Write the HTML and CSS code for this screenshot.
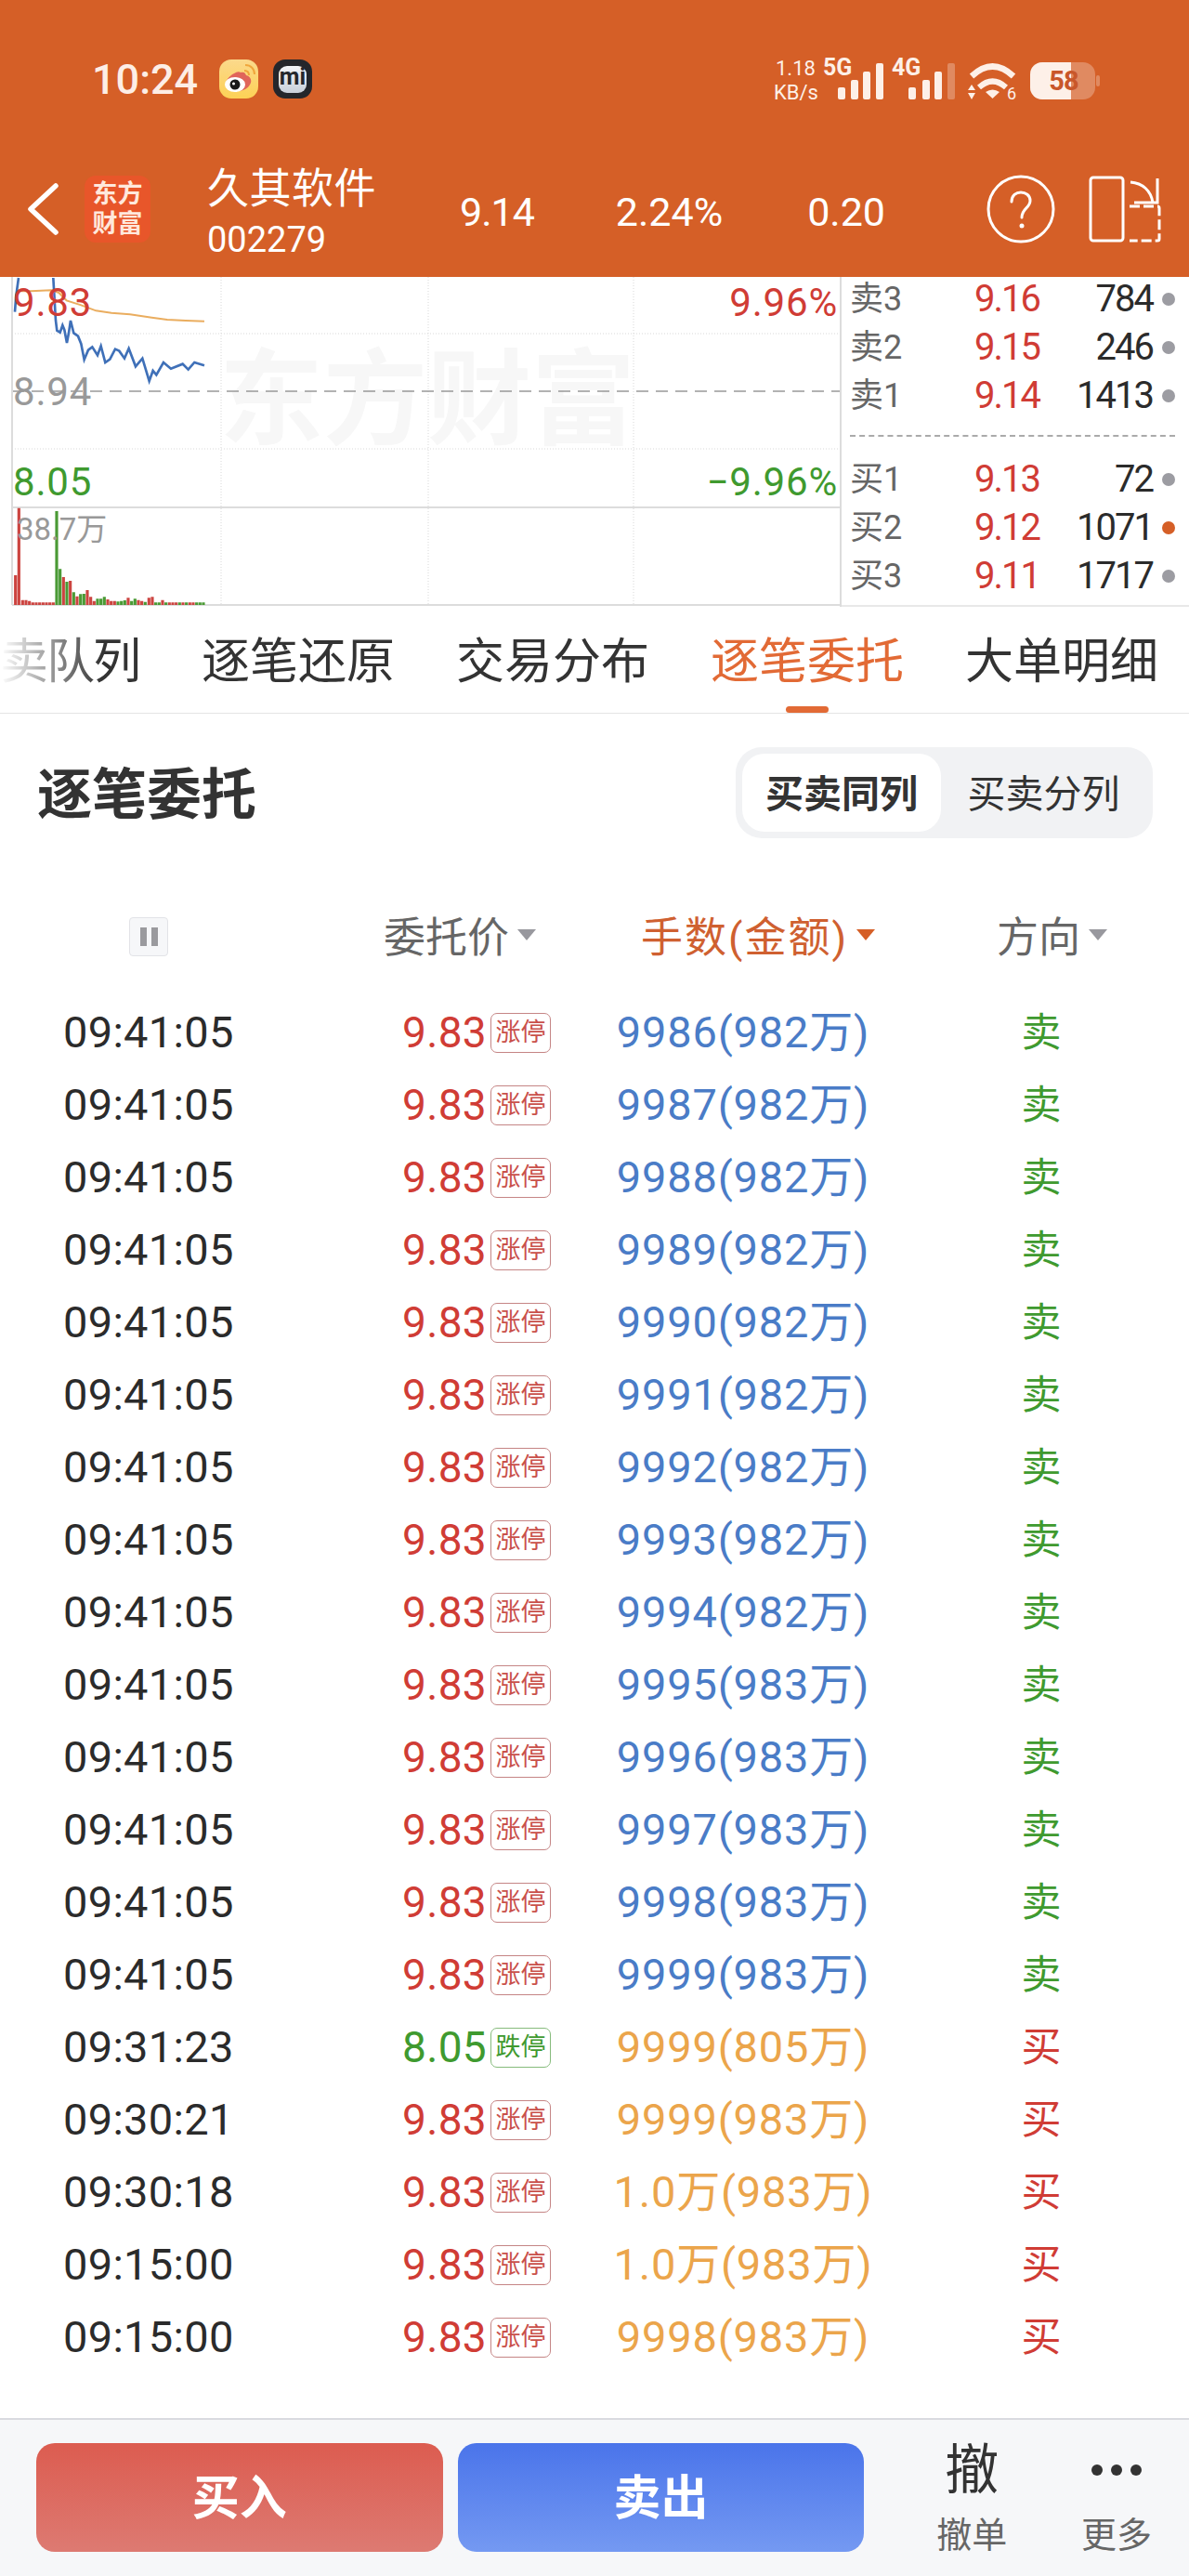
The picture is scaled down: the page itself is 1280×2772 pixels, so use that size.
FILE: index.html
```html
<!DOCTYPE html>
<html lang="zh-CN">
<head>
    <meta charset="UTF-8">
    <meta name="viewport" content="width=device-width, initial-scale=1.0">
    <title>久其软件 逐笔委托</title>
    <link rel="stylesheet" href="styles.css">
</head>
<body>
    <header class="header">
        <div class="status-bar">
            <span class="clock">10:24</span>
            <svg class="app-icon" width="42" height="42" viewBox="0 0 42 42">
                <defs>
                    <linearGradient id="weiboBg" x1="0" y1="0" x2="0" y2="1">
                        <stop offset="0" stop-color="#fbd98c"/>
                        <stop offset="1" stop-color="#fdd155"/>
                    </linearGradient>
                </defs>
                <rect width="42" height="42" rx="13" fill="url(#weiboBg)"/>
                <path d="M7 27c0-6 6-11 11-13 2-1 4-1 5 0 3-1 5 0 6 3 4 1 6 4 5 8-2 6-8 9-15 9-7 0-12-3-12-7z" fill="#e0655a"/>
                <ellipse cx="17" cy="27" rx="11" ry="8" fill="#fff"/>
                <circle cx="17" cy="27" r="5.5" fill="#1a1a1a"/>
                <circle cx="15.500" cy="26" r="1.500" fill="#fff"/>
                <path d="M27 12c3 0 5 2 5 5M28 6c6 0 10 4 10 10" fill="none" stroke="#f0a63c" stroke-width="2"/>
            </svg>
            <svg class="app-icon mi-icon" width="42" height="42" viewBox="0 0 42 42">
                <defs>
                    <linearGradient id="miBg" x1="0" y1="0" x2="0" y2="1">
                        <stop offset="0" stop-color="#f2f4f7"/>
                        <stop offset="1" stop-color="#c9d0da"/>
                    </linearGradient>
                </defs>
                <rect width="42" height="42" rx="13" fill="#24262b"/>
                <rect x="6" y="7" width="30" height="29" rx="9" fill="url(#miBg)"/>
                <text class="mi-text" x="21" y="27" text-anchor="middle">mi</text>
            </svg>
            <svg class="status-right" width="355" height="55" viewBox="0 0 355 55">
                <g class="status-ink">
                    <text class="speed" x="2" y="23">1.18</text>
                    <text class="speed" x="0" y="49">KB/s</text>
                    <text class="net" x="53" y="23">5G</text>
                    <rect x="69" y="36" width="8" height="13" rx="2"/>
                    <rect x="83" y="28" width="8" height="21" rx="2"/>
                    <rect x="96" y="19" width="8" height="30" rx="2"/>
                    <rect x="110" y="10" width="8" height="39" rx="2"/>
                    <text class="net" x="127" y="23">4G</text>
                    <rect x="145" y="36" width="8" height="13" rx="2"/>
                    <rect x="160" y="28" width="8" height="21" rx="2"/>
                    <rect x="173" y="19" width="8" height="30" rx="2"/>
                    <rect x="187" y="10" width="8" height="39" rx="2" opacity="0.3"/>
                    <path d="M213 24Q235.500 3 258 24" fill="none" stroke="#fdf0e8" stroke-width="6.500"/>
                    <path d="M221 36Q235.500 23 250 36" fill="none" stroke="#fdf0e8" stroke-width="6"/>
                    <path d="M235.500 48L228 41Q235.500 36 243 41Z"/>
                    <path d="M209 39L213 33L217 39ZM209 42L217 42L213 49Z"/>
                    <text class="wifi-num" x="251" y="49">6</text>
                    <rect x="276" y="9" width="70" height="40" rx="13" opacity="0.3"/>
                    <path d="M289 9H320V49H289A13 13 0 0 1 276 36V22A13 13 0 0 1 289 9Z"/>
                    <rect x="347" y="23" width="4" height="12" rx="2" opacity="0.3"/>
                    <text class="battery-num" x="312" y="39" text-anchor="middle">58</text>
                </g>
            </svg>
        </div>
        <div class="nav">
            <svg class="back" width="34" height="56" viewBox="0 0 34 56">
                <path d="M31 3L4 28L31 53" fill="none" stroke="#fff" stroke-width="5.500" stroke-linecap="round" stroke-linejoin="round"/>
            </svg>
            <div class="logo">东方<br>财富</div>
            <div class="stock">
                <div class="stock-name">久其软件</div>
                <div class="stock-code">002279</div>
            </div>
            <div class="quotes">
                <span class="quote-price">9.14</span>
                <span>2.24%</span>
                <span class="quote-change">0.20</span>
            </div>
            <svg class="help" width="74" height="74" viewBox="0 0 74 74">
                <circle cx="37" cy="37" r="35" fill="none" stroke="#fff" stroke-width="3"/>
                <path d="M27 29c0-7 5-10 10-10s10 3 10 9c0 8-9 8-9 18" fill="none" stroke="#fff" stroke-width="3" stroke-linecap="round"/>
                <circle cx="38" cy="55" r="2.500" fill="#fff"/>
            </svg>
            <svg class="split" width="78" height="72" viewBox="0 0 78 72">
                <g fill="none" stroke="#fff" stroke-width="3">
                    <rect x="2" y="2" width="35" height="68" rx="3"/>
                    <path d="M45 7C58 8 67 16 69 29"/>
                    <path d="M74 3V29H49"/>
                    <path d="M44 33H74A2 2 0 0 1 76 35V68A2 2 0 0 1 74 70H44" stroke-dasharray="11 4"/>
                </g>
            </svg>
        </div>
    </header>

    <section class="market">
        <svg class="chart" width="906" height="355" viewBox="0 0 906 355">
            <text class="watermark" x="236" y="172">东方财富</text>
            <g class="grid-dots">
                <path d="M13 61H905M13 185H905"/>
                <path d="M238 0V353M461 0V353M682 0V353"/>
            </g>
            <path d="M13 123H905" class="grid-dash"/>
            <path d="M13 248H905M13 353H905M13 0V353M905 0V355" class="grid-solid"/>
            <g transform="translate(0,-3) scale(0.3333)">
                <polyline class="avg-line" points="62,55 100,55 165,52 190,60 215,85 262,100 310,118 360,125 420,130 490,140 540,147 600,150 660,152"/>
                <polyline class="price-line" points="48,122 52,70 60,12"/>
                <polyline class="price-line" points="172,12 180,150 184,182 194,188 202,165 208,180 216,222 222,190 228,150 238,190 252,200 262,225 272,276 285,245 298,235 315,262 326,232 340,285 355,275 372,242 385,248 402,272 416,240 438,298 460,272 482,345 494,312 505,325 528,285 552,305 590,290 608,308 628,285 660,295"/>
                <path class="bars-red" d="M50 1068V972M61 1068V755M73 1068V1052M84 1068V1052M95 1068V1055M106 1068V1060M117 1068V1060M128 1068V1060M139 1068V1060M150 1068V1060M161 1068V1060M172 1068V1060M205 1068V978M227 1068V990M249 1068V1040M282 1068V1020M293 1068V1042M304 1068V1055M348 1068V1050M359 1068V1055M370 1068V1055M414 1068V1045M447 1068V1052M458 1068V1055M481 1068V1045M492 1068V1042M525 1068V1052M547 1068V1060M558 1068V1060M569 1068V1060M591 1068V1060M613 1068V1060M624 1068V1060"/>
                <path class="bars-green" d="M183 1068V765M194 1068V952M216 1068V993M238 1068V1027M260 1068V1033M271 1068V1032M315 1068V1048M326 1068V1048M337 1068V1042M381 1068V1057M392 1068V1055M403 1068V1053M425 1068V1055M436 1068V1048M469 1068V1058M503 1068V1060M514 1068V1060M536 1068V1060M580 1068V1060M602 1068V1060M635 1068V1060M646 1068V1060M657 1068V1060"/>
            </g>
            <text class="axis red" x="14" y="42">9.83</text>
            <text class="axis gray" x="14" y="138">8.94</text>
            <text class="axis green" x="14" y="235">8.05</text>
            <text class="axis volume" x="18" y="283">38.7万</text>
            <text class="axis red" x="902" y="42" text-anchor="end">9.96%</text>
            <text class="axis green" x="902" y="235" text-anchor="end">−9.96%</text>
        </svg>
        <div class="book">
            <div class="book-group">
                <div class="book-row"><span class="book-label">卖3</span><span class="book-price">9.16</span><span class="book-vol">784</span><i class="dot"></i></div>
                <div class="book-row"><span class="book-label">卖2</span><span class="book-price">9.15</span><span class="book-vol">246</span><i class="dot"></i></div>
                <div class="book-row"><span class="book-label">卖1</span><span class="book-price">9.14</span><span class="book-vol">1413</span><i class="dot"></i></div>
            </div>
            <div class="book-divider"></div>
            <div class="book-group">
                <div class="book-row"><span class="book-label">买1</span><span class="book-price">9.13</span><span class="book-vol">72</span><i class="dot"></i></div>
                <div class="book-row"><span class="book-label">买2</span><span class="book-price">9.12</span><span class="book-vol">1071</span><i class="dot dot-hot"></i></div>
                <div class="book-row"><span class="book-label">买3</span><span class="book-price">9.11</span><span class="book-vol">1717</span><i class="dot"></i></div>
            </div>
        </div>
    </section>

    <nav class="tabs">
        <span class="tab">卖队列</span>
        <span class="tab">逐笔还原</span>
        <span class="tab">交易分布</span>
        <span class="tab active">逐笔委托</span>
        <span class="tab">大单明细</span>
    </nav>

    <main class="orders">
        <div class="orders-top">
            <h2 class="orders-title">逐笔委托</h2>
            <div class="segment">
                <span class="segment-item selected">买卖同列</span>
                <span class="segment-item">买卖分列</span>
            </div>
        </div>

        <div class="orders-head">
            <span class="pause"><i></i><i></i></span>
            <span class="head-cell head-price">委托价<i class="tri"></i></span>
            <span class="head-cell head-qty sorted">手数(金额)<i class="tri"></i></span>
            <span class="head-cell head-side">方向<i class="tri"></i></span>
        </div>

        <div class="row"><span class="time">09:41:05</span><span class="price red">9.83</span><span class="limit">涨停</span><span class="qty blue">9986(982万)</span><span class="side green">卖</span></div>
        <div class="row"><span class="time">09:41:05</span><span class="price red">9.83</span><span class="limit">涨停</span><span class="qty blue">9987(982万)</span><span class="side green">卖</span></div>
        <div class="row"><span class="time">09:41:05</span><span class="price red">9.83</span><span class="limit">涨停</span><span class="qty blue">9988(982万)</span><span class="side green">卖</span></div>
        <div class="row"><span class="time">09:41:05</span><span class="price red">9.83</span><span class="limit">涨停</span><span class="qty blue">9989(982万)</span><span class="side green">卖</span></div>
        <div class="row"><span class="time">09:41:05</span><span class="price red">9.83</span><span class="limit">涨停</span><span class="qty blue">9990(982万)</span><span class="side green">卖</span></div>
        <div class="row"><span class="time">09:41:05</span><span class="price red">9.83</span><span class="limit">涨停</span><span class="qty blue">9991(982万)</span><span class="side green">卖</span></div>
        <div class="row"><span class="time">09:41:05</span><span class="price red">9.83</span><span class="limit">涨停</span><span class="qty blue">9992(982万)</span><span class="side green">卖</span></div>
        <div class="row"><span class="time">09:41:05</span><span class="price red">9.83</span><span class="limit">涨停</span><span class="qty blue">9993(982万)</span><span class="side green">卖</span></div>
        <div class="row"><span class="time">09:41:05</span><span class="price red">9.83</span><span class="limit">涨停</span><span class="qty blue">9994(982万)</span><span class="side green">卖</span></div>
        <div class="row"><span class="time">09:41:05</span><span class="price red">9.83</span><span class="limit">涨停</span><span class="qty blue">9995(983万)</span><span class="side green">卖</span></div>
        <div class="row"><span class="time">09:41:05</span><span class="price red">9.83</span><span class="limit">涨停</span><span class="qty blue">9996(983万)</span><span class="side green">卖</span></div>
        <div class="row"><span class="time">09:41:05</span><span class="price red">9.83</span><span class="limit">涨停</span><span class="qty blue">9997(983万)</span><span class="side green">卖</span></div>
        <div class="row"><span class="time">09:41:05</span><span class="price red">9.83</span><span class="limit">涨停</span><span class="qty blue">9998(983万)</span><span class="side green">卖</span></div>
        <div class="row"><span class="time">09:41:05</span><span class="price red">9.83</span><span class="limit">涨停</span><span class="qty blue">9999(983万)</span><span class="side green">卖</span></div>
        <div class="row"><span class="time">09:31:23</span><span class="price green">8.05</span><span class="limit limit-down">跌停</span><span class="qty amber">9999(805万)</span><span class="side red">买</span></div>
        <div class="row"><span class="time">09:30:21</span><span class="price red">9.83</span><span class="limit">涨停</span><span class="qty amber">9999(983万)</span><span class="side red">买</span></div>
        <div class="row"><span class="time">09:30:18</span><span class="price red">9.83</span><span class="limit">涨停</span><span class="qty amber">1.0万(983万)</span><span class="side red">买</span></div>
        <div class="row"><span class="time">09:15:00</span><span class="price red">9.83</span><span class="limit">涨停</span><span class="qty amber">1.0万(983万)</span><span class="side red">买</span></div>
        <div class="row"><span class="time">09:15:00</span><span class="price red">9.83</span><span class="limit">涨停</span><span class="qty amber">9998(983万)</span><span class="side red">买</span></div>
    </main>

    <footer class="footer">
        <button class="trade buy" type="button">买入</button>
        <button class="trade sell" type="button">卖出</button>
        <div class="tool">
            <span class="tool-icon">撤</span>
            <span class="tool-label">撤单</span>
        </div>
        <div class="tool">
            <span class="tool-icon dots"><i></i><i></i><i></i></span>
            <span class="tool-label">更多</span>
        </div>
    </footer>
</body>
</html>
```

FILE: styles.css
```css
* {
    box-sizing: border-box;
}

body {
    margin: 0;
    width: 1280px;
    height: 2772px;
    display: flex;
    flex-direction: column;
    overflow: hidden;
    background-color: #fff;
    color: #333;
    font-family: Roboto, "Noto Sans CJK SC", sans-serif;
}

.red { color: #d03c35; fill: #d03c35; }
.green { color: #3f9a2f; fill: #3f9a2f; }
.gray { fill: #999; }
.blue { color: #4a7cc7; }
.amber { color: #eba54b; }

/* header */
.header {
    height: 298px;
    flex-shrink: 0;
    background-color: #d55f27;
    color: #fff;
}

.status-bar {
    height: 170px;
    padding: 0 92px 0 99px;
    display: flex;
    align-items: center;
}

.clock {
    font-size: 45px;
    font-weight: 500;
    color: #fdeee6;
    width: 137px;
}

.mi-icon {
    margin-left: 16px;
}

.mi-text {
    font-size: 25px;
    font-weight: 700;
    fill: #24262b;
}

.status-right {
    margin-left: auto;
}

.status-ink {
    fill: #fdf0e8;
}

.speed {
    font-size: 22px;
}

.net {
    font-size: 25px;
    font-weight: 700;
}

.wifi-num {
    font-size: 18px;
}

.battery-num {
    font-size: 29px;
    font-weight: 700;
    fill: #c9572a;
    letter-spacing: -1px;
}

.nav {
    height: 128px;
    padding: 0 0 18px 29px;
    display: flex;
    align-items: center;
}

.logo {
    width: 71px;
    height: 72px;
    margin-left: 28px;
    border-radius: 12px;
    background-color: #e8562a;
    color: #ffe8dc;
    font-size: 27px;
    font-weight: 700;
    line-height: 32px;
    text-align: center;
    padding-top: 4px;
}

.stock {
    width: 180px;
    margin: 10px 0 0 61px;
    white-space: nowrap;
}

.stock-name {
    font-size: 45px;
    letter-spacing: 0.5px;
    line-height: 56px;
}

.stock-code {
    font-size: 38px;
    line-height: 52px;
}

.quotes {
    margin: 6px 0 0 92px;
    display: flex;
    gap: 88px;
    font-size: 43px;
}

.quote-price {
    letter-spacing: -1px;
}

.quote-change {
    margin-left: 3px;
}

.help {
    margin-left: 109px;
}

.split {
    margin-left: 36px;
}

/* chart and order book */
.market {
    height: 355px;
    flex-shrink: 0;
    display: flex;
}

.chart {
    flex-shrink: 0;
}

.watermark {
    font-size: 112px;
    font-weight: 700;
    fill: #f7f7f7;
}

.grid-dots path {
    fill: none;
    stroke: #d8d8d8;
    stroke-width: 1;
    stroke-dasharray: 1 2;
}

.grid-dash {
    fill: none;
    stroke: #999;
    stroke-width: 1.5;
    stroke-dasharray: 13 8;
}

.grid-solid {
    fill: none;
    stroke: #dcdcdc;
    stroke-width: 2;
}

.avg-line {
    fill: none;
    stroke: #eaad5f;
    stroke-width: 6;
}

.price-line {
    fill: none;
    stroke: #3f70b8;
    stroke-width: 8;
}

.bars-red,
.bars-green {
    fill: none;
    stroke-width: 9.500;
}

.bars-red { stroke: #cc4440; }
.bars-green { stroke: #4a9a35; }

.axis {
    font-size: 42px;
    letter-spacing: 0.8px;
}

.axis.volume {
    font-size: 33px;
    letter-spacing: 0;
    fill: #999;
}

.book {
    flex: 1;
    margin-top: -2px;
    padding: 0 15px 0 9px;
    border-bottom: 2px solid #e8e8e8;
}

.book-row {
    height: 52px;
    display: grid;
    grid-template-columns: 60px 144px 122px 24px;
    align-items: center;
    font-size: 40px;
    line-height: 46px;
    letter-spacing: -2px;
}

.book-label {
    font-size: 36px;
    color: #666;
    letter-spacing: 0;
}

.book-price {
    color: #d03c35;
    text-align: right;
}

.book-vol {
    color: #2b2b2b;
    text-align: right;
}

.dot {
    width: 14px;
    height: 14px;
    border-radius: 50%;
    justify-self: end;
    background-color: #9c9ca2;
}

.dot-hot {
    background-color: #d55f27;
}

.book-divider {
    height: 18px;
    margin-bottom: 20px;
    border-bottom: 2px dashed #aaa;
}

/* tabs */
.tabs {
    height: 115px;
    flex-shrink: 0;
    position: relative;
    padding: 5px 0 0 0;
    display: flex;
    align-items: center;
    gap: 66px;
    overflow: hidden;
    border-bottom: 1px solid #e4e4e4;
    font-size: 52px;
    line-height: 60px;
}

.tabs::before {
    content: "";
    position: absolute;
    left: 0;
    top: 0;
    bottom: 0;
    width: 110px;
    z-index: 1;
    background: linear-gradient(to right, #fff 0%, rgba(255, 255, 255, 0) 100%);
}

.tab {
    flex-shrink: 0;
    position: relative;
    color: #333;
}

.tab:first-child {
    margin-right: 1px;
    letter-spacing: -2px;
}

.tab.active {
    height: 100%;
    line-height: 109px;
    color: #e26a35;
}

.tab.active::after {
    content: "";
    position: absolute;
    left: 81px;
    bottom: 0;
    width: 46px;
    height: 7px;
    border-radius: 4px;
    background-color: #e26a35;
}

/* order list */
.orders {
    flex: 1;
}

.orders-top {
    height: 134px;
    padding: 36px 39px 0 40px;
    display: flex;
    justify-content: space-between;
    align-items: flex-start;
}

.orders-title {
    margin: 0;
    font-size: 59px;
    line-height: 104px;
    font-weight: 700;
    color: #333;
}

.segment {
    width: 449px;
    height: 98px;
    padding: 7px;
    display: flex;
    border-radius: 28px;
    background-color: #f1f2f4;
    font-size: 41px;
    line-height: 52px;
}

.segment-item {
    width: 214px;
    display: flex;
    justify-content: center;
    align-items: center;
    padding-top: 3px;
    border-radius: 24px;
    color: #333;
}

.segment-item + .segment-item {
    flex: 1;
}

.segment-item.selected {
    background-color: #fff;
    font-weight: 700;
}

.orders-head {
    height: 46px;
    margin: 83px 0 41px;
    padding-left: 139px;
    display: flex;
    align-items: center;
    font-size: 45px;
    line-height: 50px;
    color: #666;
}

.pause {
    width: 42px;
    height: 42px;
    display: flex;
    justify-content: center;
    align-items: center;
    gap: 5px;
    border: 1.500px solid #e2e3e7;
    border-radius: 4px;
    background-color: #f6f7f9;
}

.pause i {
    width: 7px;
    height: 20px;
    background-color: #9a9a9e;
}

.head-cell {
    display: flex;
    align-items: center;
    gap: 9px;
    padding-top: 3px;
}

.head-price { margin-left: 232px; }
.head-qty { margin-left: 113px; letter-spacing: 2px; }
.head-side { margin-left: 131px; }

.tri {
    width: 0;
    height: 0;
    margin-bottom: 7px;
    border-left: 10px solid transparent;
    border-right: 10px solid transparent;
    border-top: 12px solid #98989e;
}

.sorted {
    color: #cf6030;
}

.sorted .tri {
    border-top-color: #d55f27;
}

.row {
    height: 78px;
    padding-left: 68px;
    display: grid;
    grid-template-columns: 201px 255px 69px 414px 228px;
    align-items: center;
    font-size: 47px;
    line-height: 50px;
}

.time {
    color: #2b2b2b;
    letter-spacing: 0.3px;
}

.price {
    text-align: right;
    font-size: 46px;
    letter-spacing: 0.3px;
}

.limit {
    width: 65px;
    height: 43px;
    justify-self: end;
    border: 1.500px solid #c58585;
    border-radius: 7px;
    display: flex;
    justify-content: center;
    align-items: center;
    font-size: 27px;
    line-height: 30px;
    color: #c9504a;
}

.limit-down {
    border-color: #86bb7c;
    color: #3f9a2f;
}

.qty {
    text-align: center;
    letter-spacing: 0.8px;
}

.side {
    text-align: center;
    font-size: 43px;
}

/* bottom bar */
.footer {
    height: 170px;
    flex-shrink: 0;
    padding-top: 25px;
    padding-left: 39px;
    display: flex;
    align-items: flex-start;
    border-top: 2px solid #d9dae0;
    background-color: #f6f7f9;
}

.trade {
    width: 438px;
    height: 117px;
    padding: 3px 0 0;
    border: none;
    border-radius: 20px;
    color: #fff;
    font-family: inherit;
    font-size: 51px;
    font-weight: 700;
    line-height: 60px;
}

.buy {
    background: linear-gradient(to bottom, #dc5c50, #dd7a72);
}

.sell {
    margin-left: 16px;
    background: linear-gradient(to bottom, #4a74ea, #7499f2);
}

.tool {
    width: 156px;
    display: flex;
    flex-direction: column;
    align-items: center;
}

.sell + .tool {
    margin-left: 38px;
}

.tool-icon {
    height: 58px;
    font-size: 58px;
    line-height: 58px;
    color: #333;
}

.tool-label {
    margin-top: 19px;
    font-size: 38px;
    line-height: 44px;
    color: #666;
}

.dots {
    display: flex;
    align-items: center;
    gap: 9px;
}

.dots i {
    width: 12px;
    height: 12px;
    border-radius: 50%;
    background-color: #333;
}
```
